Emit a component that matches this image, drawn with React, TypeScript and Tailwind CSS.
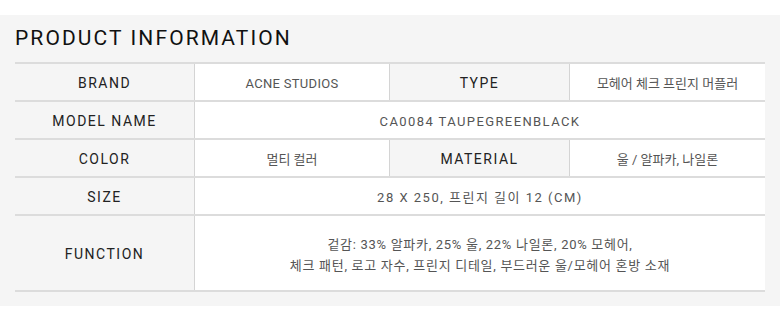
import React from "react";

const font = { fontFamily: "Roboto, 'Noto Sans CJK KR', sans-serif" };

const Label = ({ children, extra = "" }: { children: React.ReactNode; extra?: string }) => (
  <div className={`flex items-center justify-center pt-[3px] text-[14px] tracking-[1.5px] text-[#222] ${extra}`}>{children}</div>
);
const Value = ({ children, extra = "" }: { children: React.ReactNode; extra?: string }) => (
  <div className={`flex items-center justify-center pt-[3px] bg-white border-l border-[#d4d4d4] text-[13px] text-[#555] ${extra}`}>{children}</div>
);

export default function App() {
  return (
    <div className="w-[780px] h-[321px] bg-white pt-[15px]" style={font}>
      <div className="bg-[#f5f5f5] h-[291px] px-[15px] pt-[10px]">
        <h2 className="text-[21px] leading-[26px] tracking-[2.1px] text-[#111] font-normal">PRODUCT INFORMATION</h2>
        <div className="mt-[11px] border-t-2 border-[#dcdcdc]">
          <div className="grid grid-cols-[179px_195px_180px_196px] h-[38px] border-b-2 border-[#dcdcdc]">
            <Label>BRAND</Label>
            <Value extra="tracking-[0.3px]">ACNE STUDIOS</Value>
            <Label extra="border-l border-[#d4d4d4]">TYPE</Label>
            <Value extra="text-[12.3px]">모헤어 체크 프린지 머플러</Value>
          </div>
          <div className="grid grid-cols-[179px_571px] h-[38px] border-b-2 border-[#dcdcdc]">
            <Label>MODEL NAME</Label>
            <Value extra="tracking-[1.4px]">CA0084 TAUPEGREENBLACK</Value>
          </div>
          <div className="grid grid-cols-[179px_195px_180px_196px] h-[38px] border-b-2 border-[#dcdcdc]">
            <Label>COLOR</Label>
            <Value extra="text-[12.3px]">멀티 컬러</Value>
            <Label extra="border-l border-[#d4d4d4]">MATERIAL</Label>
            <Value extra="text-[12.3px]">울 / 알파카, 나일론</Value>
          </div>
          <div className="grid grid-cols-[179px_571px] h-[38px] border-b-2 border-[#dcdcdc]">
            <Label>SIZE</Label>
            <Value extra="tracking-[1.5px]">28 X 250, 프린지 길이 12 (CM)</Value>
          </div>
          <div className="grid grid-cols-[179px_571px] h-[76px] border-b-2 border-[#dcdcdc]">
            <Label>FUNCTION</Label>
            <Value extra="flex-col text-[11px] leading-[21px] tracking-[0.7px]">
              <span>겉감: 33% 알파카, 25% 울, 22% 나일론, 20% 모헤어,</span>
              <span>체크 패턴, 로고 자수, 프린지 디테일, 부드러운 울/모헤어 혼방 소재</span>
            </Value>
          </div>
        </div>
      </div>
    </div>
  );
}
